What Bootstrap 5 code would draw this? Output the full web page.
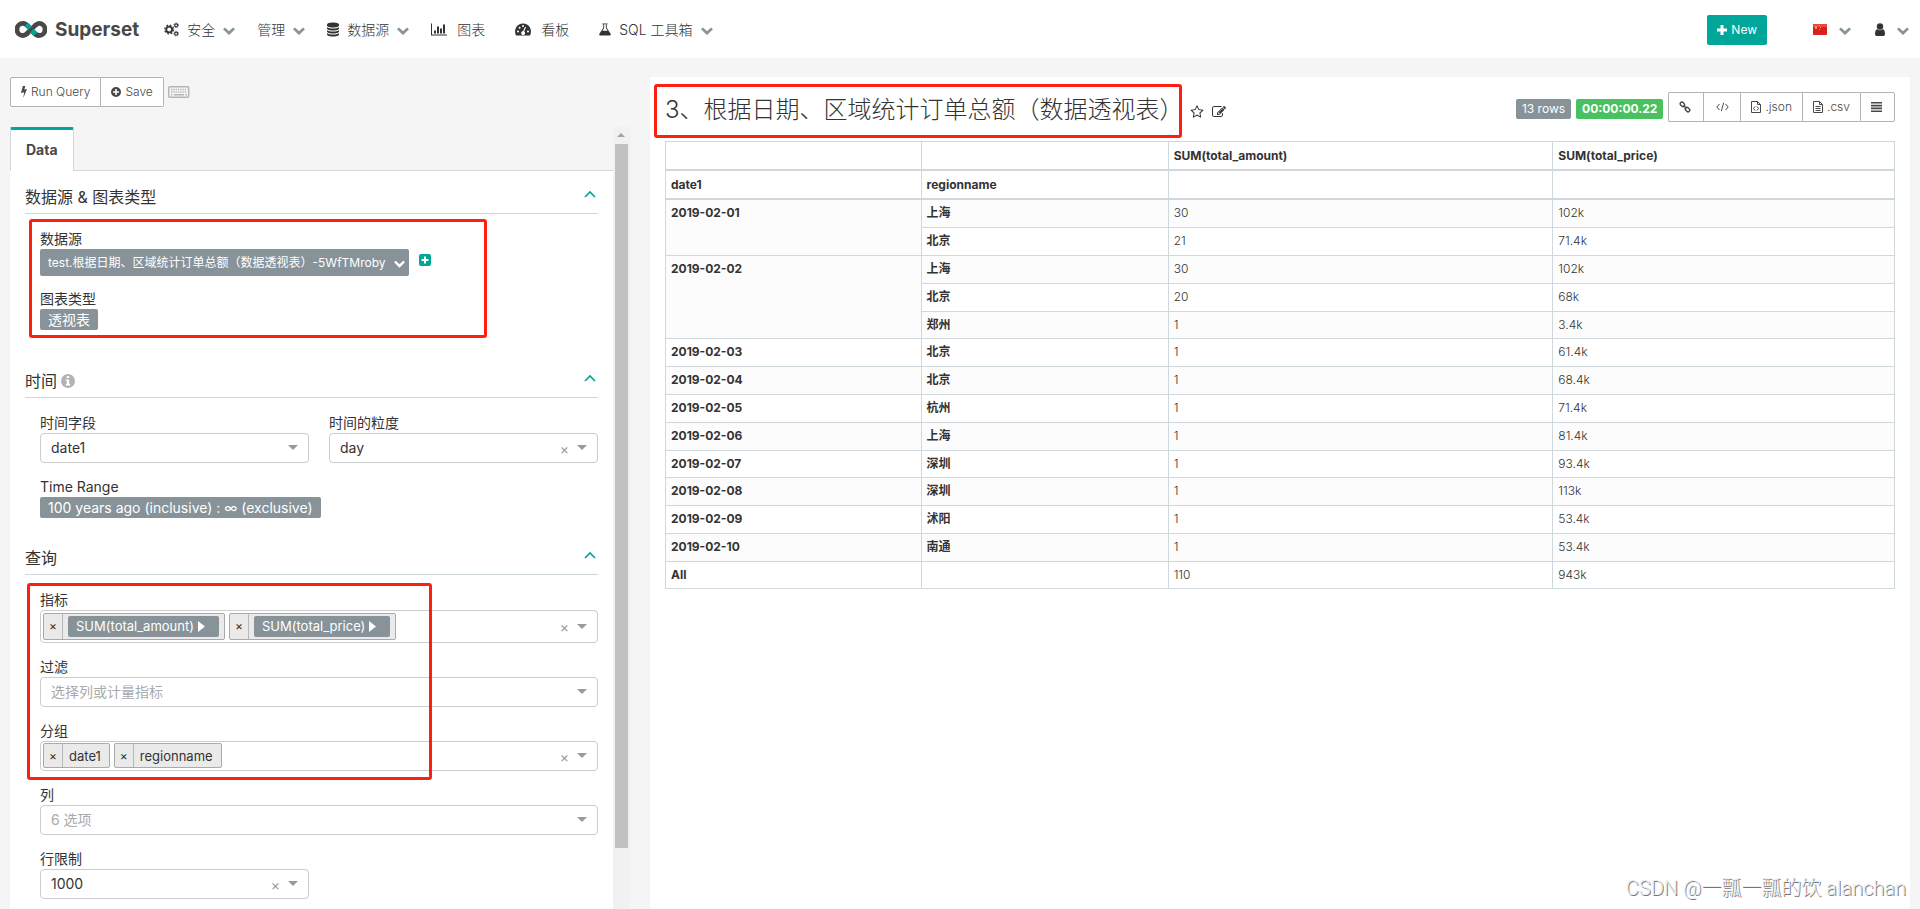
<!DOCTYPE html>
<html lang="zh-CN">
<head>
<meta charset="utf-8">
<meta name="viewport" content="width=device-width, initial-scale=1">
<title>Superset</title>
<link href="https://cdn.jsdelivr.net/npm/bootstrap@5.3.0/dist/css/bootstrap.min.css" rel="stylesheet">
<style>
:root { --teal: #00a699; --slate: #879399; --line: #cfd8dc; --ink: #333; --mark: #ff1e12; }
body { font-family: Inter, "Noto Sans CJK SC", sans-serif; font-size: 14px; line-height: 20px; color: var(--ink); background: #f5f5f5; font-weight: 300; }
svg { display: block; fill: currentColor; flex: none; }
a { color: inherit; text-decoration: none; }
.topbar { height: 59px; background: #fff; padding: 2px 11px 0 15px; }
.brand-name { font-size: 19px; font-weight: 700; color: #484848; margin: 0 25px 0 8px; }
.menu-item { display: flex; align-items: center; gap: 8px; margin-right: 22px; padding: 0; }
.menu-item.plain { gap: 10px; margin-right: 30px; }
.menu-item .ico { width: 15px; height: 15px; }
.menu-item .ico-thin { width: 12px; }
.menu-item.plain .ico { width: 16px; }
.caret { width: 12px; height: 8px; color: var(--slate); margin-top: 3px; }
.user-menu { gap: 12px; }
.btn-new { background: var(--teal); color: #fff; font-size: 12px; line-height: 18px; padding: 6px 10px; height: 30px; border-radius: 2px; border: 0; gap: 4px; font-weight: 400; margin-right: 46px; }
.workspace { --bs-gutter-x: 20px; padding: 19px 0 0; min-height: 0; }
.outer { padding: 0 10px; min-height: 0; }
.tool { background: #fff; border: 1px solid #b3b3b3; color: #484848; font-size: 12px; line-height: 18px; height: 30px; padding: 0 10px; border-radius: 2px; display: flex; align-items: center; gap: 4px; font-weight: 300; }
.tool:hover { background: #eee; color: #484848; }
.side { min-height: 0; }
.tabline { border-bottom: 1px solid var(--line); height: 44px; }
.tabline .nav-link { height: 44px; border: 1px solid var(--line); border-top: 3px solid var(--teal); border-bottom: 0; background: #fff; color: #484848; font-weight: 700; padding: 10px 15px 9px; border-radius: 2px 2px 0 0; }
.controls { background: #fff; padding: 0 15px; }
.sec-head { font-size: 16px; line-height: 22px; padding: 15px 2px 5px 0; border-bottom: 1px solid var(--line); font-weight: 400; margin: 0; }
.sec-head svg { color: var(--teal); }
.sec-body { padding: 15px 0 0 15px; margin-bottom: 14px; position: relative; }
.sec-body.first { padding-bottom: 11px; }
.sec-body .row { --bs-gutter-x: 20px; }
.field { margin-bottom: 14px; }
.first .field { margin-bottom: 13px; }
.field > label, .field > .cap { display: block; font-size: 14px; line-height: 20px; font-weight: 400; }
.pill { background: var(--slate); color: #fff; border: 0; border-radius: 2px; padding: 0 8px; height: 21px; line-height: 21px; display: flex; width: fit-content; align-items: center; font-weight: 400; }
.pill-ds { font-size: 12px; height: 27px; gap: 8px; padding: 0 4px 0 8px; }
.add { color: var(--teal); margin: 5px 0 0 10px; }
.box { position: relative; }
.box select, .multi { appearance: none; width: 100%; height: 30px; border: 1px solid #ccc; border-radius: 4px; background: #fff; padding: 0 10px; color: var(--ink); font-weight: 400; line-height: 20px; }
.box select.empty { color: #aaa; }
.multi { display: flex; align-items: center; gap: 4px; padding: 0 2px; }
.multi input { border: 0; outline: 0; flex: 1; min-width: 0; background: none; }
.multi.tall { height: 33px; }
.ind { position: absolute; right: 11px; top: 0; height: 100%; display: flex; align-items: center; gap: 8px; pointer-events: none; color: #999; }
.ind button { border: 0; background: none; padding: 2px 0 0; color: #999; line-height: 16px; }
.chip { display: flex; align-items: center; background: #eaeaea; border: 1px solid #aaa; border-radius: 2px; height: 25px; }
.chip button { width: 19px; height: 100%; border: 0; border-right: 1px solid #b8b8b8; background: none; padding: 0; font-size: 12px; line-height: 20px; color: #333; }
.chip .txt { padding: 0 8px 0 6px; font-size: 13px; }
.tall .chip { height: 27px; }
.chip .pill { font-size: 13px; margin: 0 5px; gap: 4px; padding-right: 14px; }
.track { width: 17px; background: #f1f1f1; }
.track .up { height: 17px; color: #a3a3a3; }
.track .thumb { width: 13px; height: 90%; background: #c1c1c1; }
.hl { position: absolute; border: 3px solid var(--mark); border-radius: 3px; pointer-events: none; z-index: 3; }
.hl-source { left: 4px; right: 111px; top: 5px; bottom: 3px; }
.hl-query { left: 2px; right: 166px; top: 8px; height: 197px; }
.hl-title { inset: -8px 2px -11px -11px; }
.result { background: #fff; padding: 15px; border-radius: 2px; }
.result h1 { font-size: 24px; line-height: 34px; font-weight: 300; margin: 0; position: relative; padding-top: 1px; }
.marks { margin-left: 6px; padding-top: 13px; }
.stat { font-size: 12px; line-height: 20px; height: 20px; padding: 0 6px; border-radius: 2px; color: #fff; background: var(--slate); margin-top: 7px; font-weight: 400; }
.stat.ok { background: #4ac15f; font-weight: 700; }
.stats { gap: 5px; }
.w-link { width: 35px; }
.w-code { width: 37px; }
.pivot { font-size: 12px; line-height: 1.4; margin: 14px 0 0; border: 1px solid var(--line); table-layout: fixed; }
.pivot > :not(caption) > * > * { border: 1px solid var(--line); padding: 5px; color: var(--ink); background: none; }
.pivot thead th { border-bottom-width: 2px; height: 29px; }
.pivot th { font-weight: 700; }
.pivot tbody tr:nth-child(odd) { background: #fcfcfc; }
.c-date { width: 20.8%; }
.c-region { width: 20.1%; }
.c-amount { width: 31.3%; }
.sign { position: absolute; right: 14px; bottom: 9px; font-size: 20px; line-height: 24px; color: #ededed; text-shadow: 1px 1px 0 #777; font-family: Roboto, "Noto Sans CJK SC", sans-serif; pointer-events: none; }
</style>
</head>
<body>
<svg class="d-none" aria-hidden="true">
  <symbol id="down" viewBox="0 0 12 8"><path d="M0 2.2 1.9.4 6 4.3 10.1.4 12 2.2 6 8z"/></symbol>
  <symbol id="tri" viewBox="0 0 10 5"><path d="M0 0h10L5 5z"/></symbol>
  <symbol id="up" viewBox="0 0 12 8"><path d="M1 7 6 2l5 5" fill="none" stroke="currentColor" stroke-width="1.7"/></symbol>
  <symbol id="play" viewBox="0 0 7 11"><path d="M0 0l7 5.500-7 5.500z"/></symbol>
</svg>
<div class="vh-100 d-flex flex-column overflow-hidden position-relative">
<nav class="topbar d-flex align-items-center">
  <a href="#" class="d-flex align-items-center">
    <svg width="32" height="17" viewBox="0 0 32 17" fill="none"><g stroke-width="4.800" fill="none"><path d="M20 4.500C22 2.800 23 2.400 24 2.400a6 6 0 0 1 0 12.100c-4 0-5-3-8-6s-4-6.100-8-6.100a6 6 0 0 0 0 12.100c2 0 3.500-1 5-2.600" stroke="#484848"/><path d="M11 13.500 21 3.600" stroke="#484848"/><path d="M11.300 3.500 15 7.300M17 9.500l3.500 3.700" stroke="#00a699"/></g></svg>
    <span class="brand-name">Superset</span>
  </a>
  <a href="#" class="menu-item">
    <svg class="ico" viewBox="0 0 16 16"><g fill="none" stroke="currentColor"><circle cx="5.500" cy="8" r="3.100" stroke-width="2"/><circle cx="5.500" cy="8" r="4.700" stroke-width="1.400" stroke-dasharray="1.900 1.790"/><circle cx="13" cy="3.500" r="1.600" stroke-width="1.300"/><circle cx="13" cy="3.500" r="2.600" stroke-width=".8" stroke-dasharray="1 1.040"/><circle cx="13" cy="12.500" r="1.600" stroke-width="1.300"/><circle cx="13" cy="12.500" r="2.600" stroke-width=".8" stroke-dasharray="1 1.040"/></g></svg>
    安全 <svg class="caret"><use href="#down"/></svg></a>
  <a href="#" class="menu-item">管理 <svg class="caret"><use href="#down"/></svg></a>
  <a href="#" class="menu-item">
    <svg class="ico ico-thin" viewBox="128 0 1536 1792"><path d="M896 768q237 0 443-43t325-127v170q0 69-103 128t-280 93.500-385 34.500-385-34.500-280-93.500-103-128v-170q119 84 325 127t443 43zm0 768q237 0 443-43t325-127v170q0 69-103 128t-280 93.500-385 34.500-385-34.500-280-93.500-103-128v-170q119 84 325 127t443 43zm0-384q237 0 443-43t325-127v170q0 69-103 128t-280 93.500-385 34.500-385-34.500-280-93.500-103-128v-170q119 84 325 127t443 43zm0-1152q208 0 385 34.500t280 93.500 103 128v128q0 69-103 128t-280 93.500-385 34.500-385-34.500-280-93.500-103-128v-128q0-69 103-128t280-93.500 385-34.500z"/></svg>
    数据源 <svg class="caret"><use href="#down"/></svg></a>
  <a href="#" class="menu-item plain">
    <svg class="ico" viewBox="0 0 16 14"><path d="M0 1h1v11h15v1H0zM3 8h2v3H3zM6 4h2v7H6zM9 6h2v5H9zM12 2h2v9h-2z"/></svg>图表</a>
  <a href="#" class="menu-item plain">
    <svg class="ico" viewBox="0 0 16 14"><path fill-rule="evenodd" d="M8 1a8 8 0 0 1 6.900 12H1.100A8 8 0 0 1 8 1zM3 8a1 1 0 1 0 0 2 1 1 0 0 0 0-2zm1.600-3.800a1 1 0 1 0 0 2 1 1 0 0 0 0-2zM8 2.500a1 1 0 1 0 0 2 1 1 0 0 0 0-2zm5 5.500a1 1 0 1 0 0 2 1 1 0 0 0 0-2zM10 4.300 8.200 8.600a2 2 0 1 0 1 .3l1.800-4.200z"/></svg>看板</a>
  <a href="#" class="menu-item">
    <svg class="ico ico-thin" viewBox="0 0 14 14"><path fill-rule="evenodd" d="M4 0h6v1H9v4l4.700 7.200Q14 14 12.500 14h-11Q0 14 .3 12.200L5 5V1H4zm2 1v4.300L4 8.500h6L8 5.300V1z"/></svg>SQL 工具箱 <svg class="caret"><use href="#down"/></svg></a>
  <div class="ms-auto d-flex align-items-center">
    <button class="btn-new d-flex align-items-center"><svg width="10" height="10" viewBox="0 0 10 10"><path d="M3.500 0h3v3.500H10v3H6.500V10h-3V6.500H0v-3h3.500z"/></svg>New</button>
    <a href="#" class="user-menu d-flex align-items-center" aria-label="中文"><svg width="14" height="11" viewBox="0 0 14 11"><rect width="14" height="11" rx="1" fill="#d8201f"/><rect width="14" height="3" fill="#e8483f"/><path d="M3 1.500l.5 1.200 1.300.1-1 .8.300 1.300L3 4.200l-1.100.7.300-1.300-1-.8 1.300-.1z" fill="#f6c343"/><path d="M6 1h1v1H6zM7 3h1v1H7zM6 5h1v1H6z" fill="#f6a343"/></svg><svg class="caret"><use href="#down"/></svg></a>
    <a href="#" class="user-menu d-flex align-items-center ms-4" aria-label="用户"><svg width="10" height="13" viewBox="0 0 10 13"><circle cx="5" cy="3.500" r="3.200"/><path d="M2 6Q5 8.500 8 6q2 1 2 4.500Q10 13 8.500 13h-7Q0 13 0 10.500 0 7 2 6z"/></svg><svg class="caret"><use href="#down"/></svg></a>
  </div>
</nav>
<main class="container-fluid outer flex-grow-1 d-flex flex-column">
<div class="row workspace flex-grow-1">
  <section class="col-4 d-flex flex-column h-100">
    <div class="d-flex align-items-center">
      <div class="btn-group">
        <button class="tool rounded-end-0"><svg width="6" height="12" viewBox="0 0 6 12"><path d="M1.800 0h2.500L3.300 3.500 6 3 2.300 12l.8-5.800L0 7z"/></svg>Run Query</button>
        <button class="tool rounded-start-0 border-start-0"><svg width="10" height="10" viewBox="0 0 10 10"><path fill-rule="evenodd" d="M5 0a5 5 0 1 1 0 10A5 5 0 0 1 5 0zM4.200 2v2.200H2v1.600h2.200V8h1.600V5.800H8V4.200H5.800V2z"/></svg>Save</button>
      </div>
      <svg class="ms-1" width="22" height="12" viewBox="0 0 22 12" color="#b5b5b5"><rect x=".7" y=".7" width="20" height="10.600" rx="1" fill="none" stroke="currentColor" stroke-width="1.400"/><path d="M3 3.500h16M3 6h16" stroke="currentColor" stroke-width="1.400" stroke-dasharray="1.300 1"/><path d="M3 8.700h1.500M6 8.700h10M17.500 8.700H19" stroke="currentColor" stroke-width="1.400"/></svg>
    </div>
    <div class="side d-flex flex-grow-1 mt-3 pt-1">
      <div class="flex-grow-1 overflow-hidden">
        <div class="nav tabline"><a href="#" class="nav-link">Data</a></div>
        <div class="controls">
          <h2 class="sec-head d-flex justify-content-between"><span>数据源 &amp; 图表类型</span><svg width="12" height="8" class="mt-1"><use href="#up"/></svg></h2>
          <div class="sec-body first">
            <div class="hl hl-source"></div>
            <div class="field">
              <span class="cap">数据源</span>
              <div class="d-flex align-items-start"><button class="pill pill-ds">test.根据日期、区域统计订单总额（数据透视表）-5WfTMroby<svg width="11" height="8" class="mt-1"><use href="#down"/></svg></button>
              <svg class="add" width="12" height="12" viewBox="0 0 12 12"><rect width="12" height="12" rx="2"/><path d="M6 2.500v7M2.500 6h7" stroke="#fff" stroke-width="2"/></svg></div>
            </div>
            <div class="field mb-0"><span class="cap">图表类型</span><button class="pill">透视表</button></div>
          </div>
          <h2 class="sec-head d-flex justify-content-between"><span class="d-flex align-items-center">时间<svg class="ms-1" width="14" height="14" viewBox="0 0 14 14"><circle cx="7" cy="7" r="7" fill="#b3b3b3"/><path d="M5.800 2h2.400v2H5.800zM4.800 5.500h3.400V10h1v1.500H4.800V10h1V7h-1z" fill="#fff"/></svg></span><svg width="12" height="8" class="mt-1"><use href="#up"/></svg></h2>
          <div class="sec-body">
            <div class="row">
              <div class="col-6 field"><label for="tcol">时间字段</label><div class="box"><select id="tcol"><option>date1</option></select><div class="ind"><svg width="10" height="5"><use href="#tri"/></svg></div></div></div>
              <div class="col-6 field"><label for="grain">时间的粒度</label><div class="box"><select id="grain"><option>day</option></select><div class="ind"><button aria-label="清除">×</button><svg width="10" height="5"><use href="#tri"/></svg></div></div></div>
            </div>
            <div class="field"><span class="cap">Time Range</span><button class="pill">100 years ago (inclusive) : ∞ (exclusive)</button></div>
          </div>
          <h2 class="sec-head d-flex justify-content-between"><span>查询</span><svg width="12" height="8" class="mt-1"><use href="#up"/></svg></h2>
          <div class="sec-body">
            <div class="hl hl-query"></div>
            <div class="field"><label for="metrics">指标</label><div class="box"><div class="multi tall">
              <span class="chip"><button aria-label="移除">×</button><span class="pill">SUM(total_amount)<svg width="7" height="11"><use href="#play"/></svg></span></span>
              <span class="chip"><button aria-label="移除">×</button><span class="pill">SUM(total_price)<svg width="7" height="11"><use href="#play"/></svg></span></span>
              <input id="metrics"></div><div class="ind"><button aria-label="清除">×</button><svg width="10" height="5"><use href="#tri"/></svg></div></div></div>
            <div class="field"><label for="filters">过滤</label><div class="box"><select id="filters" class="empty"><option>选择列或计量指标</option></select><div class="ind"><svg width="10" height="5"><use href="#tri"/></svg></div></div></div>
            <div class="field"><label for="groups">分组</label><div class="box"><div class="multi">
              <span class="chip"><button aria-label="移除">×</button><span class="txt">date1</span></span>
              <span class="chip"><button aria-label="移除">×</button><span class="txt">regionname</span></span>
              <input id="groups"></div><div class="ind"><button aria-label="清除">×</button><svg width="10" height="5"><use href="#tri"/></svg></div></div></div>
            <div class="field"><label for="cols">列</label><div class="box"><select id="cols" class="empty"><option>6 选项</option></select><div class="ind"><svg width="10" height="5"><use href="#tri"/></svg></div></div></div>
            <div class="row"><div class="col-6 field"><label for="limit">行限制</label><div class="box"><select id="limit"><option>1000</option></select><div class="ind"><button aria-label="清除">×</button><svg width="10" height="5"><use href="#tri"/></svg></div></div></div></div>
          </div>
        </div>
      </div>
      <div class="track d-flex flex-column align-items-center flex-shrink-0"><div class="up d-flex align-items-center"><svg width="8" height="4" viewBox="0 0 8 4"><path d="M0 4 4 0l4 4z"/></svg></div><div class="thumb"></div></div>
    </div>
  </section>
  <section class="col-8 h-100">
    <div class="result h-100">
      <div class="d-flex align-items-start">
        <h1>3、根据日期、区域统计订单总额（数据透视表）<span class="hl hl-title"></span></h1>
        <div class="marks d-flex gap-2 align-items-center">
          <svg width="14" height="14" viewBox="0 0 1664 1792"><path d="M1137 1004l306-297-422-62-189-382-189 382-422 62 306 297-73 421 378-199 377 199zm527-357q0 22-26 48l-363 354 86 500q1 7 1 20 0 50-41 50-19 0-40-12l-449-236-449 236q-22 12-40 12-21 0-31.500-14.500t-10.500-35.500q0-6 2-20l86-500-364-354q-25-27-25-48 0-37 56-46l502-73 225-455q19-41 49-41t49 41l225 455 502 73q56 9 56 46z"/></svg>
          <svg width="14" height="14" viewBox="0 0 1792 1792"><path d="M888 1184l116-116-152-152-116 116v56h96v96h56zm440-720q-16-16-33 1l-350 350q-17 17-1 33t33-1l350-350q17-17 1-33zm80 594v190q0 119-84.500 203.500t-203.500 84.500h-832q-119 0-203.500-84.500t-84.500-203.500v-832q0-119 84.500-203.500t203.500-84.500h832q63 0 117 25 15 7 18 23 3 17-9 29l-49 49q-14 14-32 8-23-6-45-6h-832q-66 0-113 47t-47 113v832q0 66 47 113t113 47h832q66 0 113-47t47-113v-126q0-13 9-22l64-64q15-15 35-7t20 29zm-96-738l288 288-672 672h-288v-288zm444 132l-92 92-288-288 92-92q28-28 68-28t68 28l152 152q28 28 28 68t-28 68z"/></svg>
        </div>
        <div class="stats ms-auto d-flex align-items-start">
          <span class="stat">13 rows</span><span class="stat ok">00:00:00.22</span>
          <div class="btn-group">
            <button class="tool w-link rounded-end-0 border-end-0" aria-label="链接"><svg width="12" height="12" viewBox="0 0 12 12"><g fill="none" stroke="currentColor" stroke-width="1.400"><rect x=".9" y="1.600" width="5" height="3.400" rx="1.700" transform="rotate(45 3.400 3.300)"/><rect x="6" y="6.900" width="5" height="3.400" rx="1.700" transform="rotate(45 8.500 8.600)"/><path d="M4.500 4.500l3 3"/></g></svg></button>
            <button class="tool w-code justify-content-center rounded-0 border-end-0" aria-label="嵌入代码"><svg width="13" height="10" viewBox="0 0 13 10"><path d="M3.500 2 .8 5l2.700 3M9.500 2l2.700 3-2.700 3M7.700.8 5.300 9.200" fill="none" stroke="currentColor"/></svg></button>
            <button class="tool rounded-0 border-end-0"><svg width="10" height="12" viewBox="0 0 10 12"><path d="M.5.500h6l3 3v8h-9zM6.500.500v3h3M4 5.500 2.500 7.500 4 9.500M6 5.500l1.500 2L6 9.500" fill="none" stroke="currentColor"/></svg>.json</button>
            <button class="tool rounded-0 border-end-0"><svg width="10" height="12" viewBox="0 0 10 12"><path d="M.5.500h6l3 3v8h-9zM6.500.500v3h3M2.500 5.500h5M2.500 7.500h5M2.500 9.500h5" fill="none" stroke="currentColor"/></svg>.csv</button>
            <button class="tool w-link rounded-start-0" aria-label="菜单"><svg width="11" height="10" viewBox="0 0 11 10"><path d="M0 0h11v1.600H0zM0 2.800h11v1.600H0zM0 5.600h11v1.600H0zM0 8.400h11V10H0z"/></svg></button>
          </div>
        </div>
      </div>
      <table class="table pivot">
        <colgroup><col class="c-date"><col class="c-region"><col class="c-amount"><col></colgroup>
        <thead>
          <tr><th></th><th></th><th>SUM(total_amount)</th><th>SUM(total_price)</th></tr>
          <tr><th>date1</th><th>regionname</th><th></th><th></th></tr>
        </thead>
        <tbody>
          <tr><th rowspan="2">2019-02-01</th><th>上海</th><td>30</td><td>102k</td></tr>
          <tr><th>北京</th><td>21</td><td>71.4k</td></tr>
          <tr><th rowspan="3">2019-02-02</th><th>上海</th><td>30</td><td>102k</td></tr>
          <tr><th>北京</th><td>20</td><td>68k</td></tr>
          <tr><th>郑州</th><td>1</td><td>3.4k</td></tr>
          <tr><th>2019-02-03</th><th>北京</th><td>1</td><td>61.4k</td></tr>
          <tr><th>2019-02-04</th><th>北京</th><td>1</td><td>68.4k</td></tr>
          <tr><th>2019-02-05</th><th>杭州</th><td>1</td><td>71.4k</td></tr>
          <tr><th>2019-02-06</th><th>上海</th><td>1</td><td>81.4k</td></tr>
          <tr><th>2019-02-07</th><th>深圳</th><td>1</td><td>93.4k</td></tr>
          <tr><th>2019-02-08</th><th>深圳</th><td>1</td><td>113k</td></tr>
          <tr><th>2019-02-09</th><th>沭阳</th><td>1</td><td>53.4k</td></tr>
          <tr><th>2019-02-10</th><th>南通</th><td>1</td><td>53.4k</td></tr>
          <tr><th>All</th><th></th><td>110</td><td>943k</td></tr>
        </tbody>
      </table>
    </div>
  </section>
</div>
</main>
<div class="sign">CSDN @一瓢一瓢的饮 alanchan</div>
</div>
<script src="https://cdn.jsdelivr.net/npm/bootstrap@5.3.0/dist/js/bootstrap.bundle.min.js"></script>
</body>
</html>
